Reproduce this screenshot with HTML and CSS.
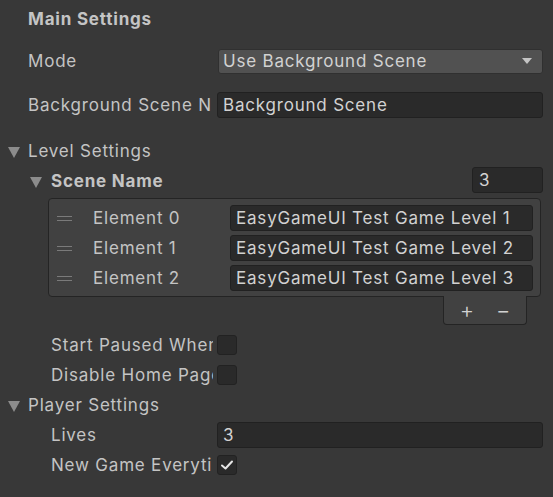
FILE: index.html
```html
<!DOCTYPE html>
<html>
<head>
<meta charset="utf-8">
<link rel="stylesheet" href="styles.css">
</head>
<body>
<div class="inspector">
  <div class="row header-row"><span class="header">Main Settings</span></div>

  <div class="row mode-row">
    <span class="label">Mode</span>
    <div class="dropdown"><span>Use Background Scene</span><span class="arrow"></span></div>
  </div>

  <div class="row bg-row">
    <span class="label">Background Scene N</span>
    <div class="field">Background Scene</div>
  </div>

  <div class="row fold-row level-row">
    <span class="tri"></span><span class="fold-label">Level Settings</span>
  </div>

  <div class="row fold-row sub">
    <span class="tri"></span><span class="fold-label bold">Scene Name</span>
    <div class="field size-field">3</div>
  </div>

  <div class="list-box">
    <div class="list-row">
      <span class="handle"></span><span class="el-label">Element 0</span>
      <div class="field el-field">EasyGameUI Test Game Level 1</div>
    </div>
    <div class="list-row">
      <span class="handle"></span><span class="el-label">Element 1</span>
      <div class="field el-field">EasyGameUI Test Game Level 2</div>
    </div>
    <div class="list-row">
      <span class="handle"></span><span class="el-label">Element 2</span>
      <div class="field el-field">EasyGameUI Test Game Level 3</div>
    </div>
  </div>
  <div class="list-footer-wrap">
    <div class="list-footer"><span class="btn">+</span><span class="btn">&minus;</span></div>
  </div>

  <div class="row sub pad-top">
    <span class="label">Start Paused When</span>
    <span class="checkbox"></span>
  </div>
  <div class="row sub">
    <span class="label">Disable Home Page</span>
    <span class="checkbox"></span>
  </div>

  <div class="row fold-row">
    <span class="tri"></span><span class="fold-label">Player Settings</span>
  </div>
  <div class="row sub">
    <span class="label">Lives</span>
    <div class="field">3</div>
  </div>
  <div class="row sub">
    <span class="label">New Game Everyti</span>
    <span class="checkbox checked">
      <svg width="14" height="12" viewBox="0 0 14 12"><path d="M2 6.5 L5.5 9.5 L12 2.5" fill="none" stroke="#e6e6e6" stroke-width="2" stroke-linecap="round" stroke-linejoin="round"/></svg>
    </span>
  </div>
</div>
</body>
</html>
```

FILE: styles.css
```css
html, body {
  margin: 0;
  padding: 0;
  background: #383838;
}
body {
  width: 553px;
  height: 497px;
  overflow: hidden;
  font-family: "Inter", "Noto Sans", sans-serif;
  font-size: 17px;
  letter-spacing: 0.8px;
  color: #c4c4c4;
}
.inspector {
  display: flex;
  flex-direction: column;
  padding: 4px 10px 0 28px;
}
.row {
  display: flex;
  align-items: center;
  height: 30px;
  flex-shrink: 0;
}
.row.sub {
  padding-left: 23px;
}
.header {
  font-weight: 700;
}
.mode-row {
  margin-top: 12px;
}
.bg-row {
  margin-top: 14px;
}
.level-row {
  margin-top: 16px;
}
.label {
  width: 185px;
  flex-shrink: 0;
  overflow: hidden;
  white-space: nowrap;
  margin-right: 4px;
}
.row.sub .label {
  width: 162px;
}
.field {
  flex: 1;
  height: 26px;
  box-sizing: border-box;
  background: #2a2a2a;
  border: 1px solid #212121;
  border-radius: 3px;
  padding-left: 5px;
  line-height: 24px;
  white-space: nowrap;
  overflow: hidden;
  color: #d2d2d2;
}
.dropdown {
  flex: 1;
  margin-left: 1px;
  height: 25px;
  box-sizing: border-box;
  background: #515151;
  border: 1px solid #303030;
  border-radius: 3px;
  padding: 0 10px 0 4px;
  display: flex;
  align-items: center;
  justify-content: space-between;
  color: #d2d2d2;
}
.arrow {
  width: 0;
  height: 0;
  border-left: 5px solid transparent;
  border-right: 5px solid transparent;
  border-top: 6px solid #c4c4c4;
}
.tri {
  width: 0;
  height: 0;
  border-left: 6px solid transparent;
  border-right: 6px solid transparent;
  border-top: 11px solid #8c8c8c;
  margin-left: -20px;
  margin-right: 8px;
  margin-top: 2px;
}
.fold-row.sub .tri {
  margin-left: -21px;
  margin-right: 9px;
}
.bold {
  font-weight: 700;
}
.size-field {
  flex: 0 0 71px;
  margin-left: auto;
  margin-top: -2px;
  padding-left: 6px;
}
.list-box {
  margin: 2px 2px 0 20px;
  height: 99px;
  box-sizing: border-box;
  background: #414141;
  border: 1px solid #242424;
  border-radius: 4px;
  padding: 4px 7px 0 8px;
  flex-shrink: 0;
}
.list-row {
  display: flex;
  align-items: center;
  height: 30px;
}
.handle {
  width: 15px;
  height: 5px;
  box-sizing: border-box;
  border-top: 1px solid #7a7a7a;
  border-bottom: 1px solid #7a7a7a;
  margin-right: 21px;
}
.el-label {
  width: 137px;
  flex-shrink: 0;
  white-space: nowrap;
}
.el-field {
  height: 26px;
  padding-left: 5px;
}
.list-footer-wrap {
  display: flex;
  justify-content: flex-end;
  margin-right: 16px;
  margin-top: -1px;
}
.list-footer {
  width: 84px;
  height: 29px;
  box-sizing: border-box;
  background: #414141;
  border: 1px solid #242424;
  border-top: none;
  border-radius: 0 0 4px 4px;
  display: flex;
  align-items: center;
  justify-content: center;
  gap: 22px;
  font-size: 22px;
  font-weight: 300;
  letter-spacing: 0;
  color: #d2d2d2;
  line-height: 1;
}
.btn {
  display: block;
}
.pad-top {
  margin-top: 5px;
}
.checkbox {
  width: 20px;
  height: 20px;
  box-sizing: border-box;
  background: #2a2a2a;
  border: 1px solid #222222;
  border-radius: 3px;
  display: flex;
  align-items: center;
  justify-content: center;
}
```
